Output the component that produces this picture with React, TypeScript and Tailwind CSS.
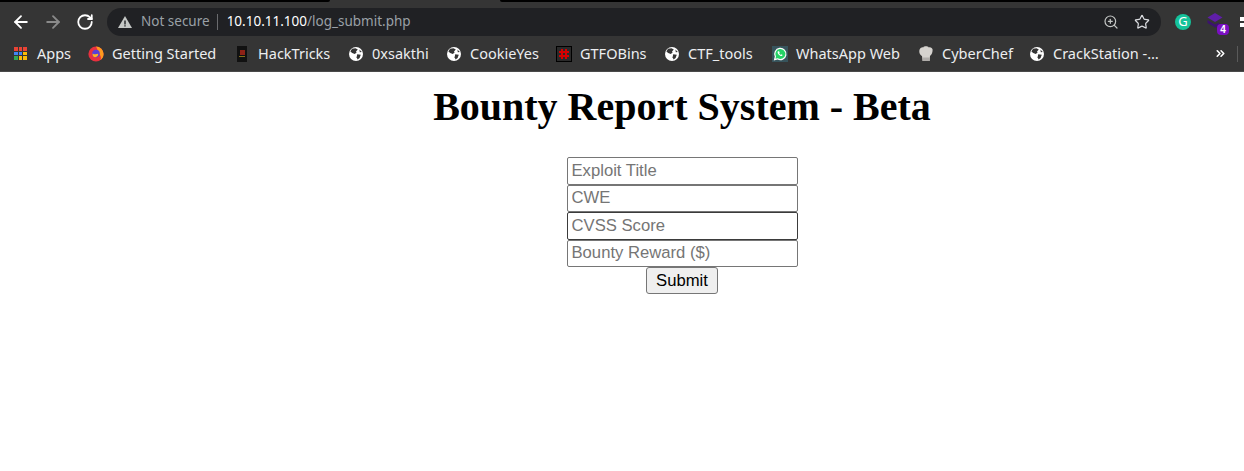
import React from "react";
import { ArrowLeft, ArrowRight, RotateCw, ZoomIn, Star, ChevronsRight } from "lucide-react";

function Globe() {
  return (
    <svg width="16" height="16" viewBox="0 0 16 16" className="shrink-0">
      <circle cx="8" cy="8" r="7" fill="#fff" />
      <path d="M4 2.8 7.5 2.2 9.8 3.6 8 5.4 8.6 6.6 6.8 8 4.2 7 2.4 5.6Z" fill="#353535" />
      <path d="M9.2 8.2 12.8 8.8 11.6 12 9.6 13.6 8.6 11.2Z" fill="#353535" />
      <path d="M11.4 3.6 13.8 6 11.8 6.2Z" fill="#353535" />
    </svg>
  );
}

function AppsIcon() {
  const colors = [
    "bg-[#ea4335]", "bg-[#ea4335]", "bg-[#ea4335]",
    "bg-[#4285f4]", "bg-[#4285f4]", "bg-[#fbbc05]",
    "bg-[#34a853]", "bg-[#fbbc05]", "bg-[#fbbc05]",
  ];
  return (
    <div className="grid grid-cols-3 gap-[1px] w-[13px] h-[13px] shrink-0 mr-[2px]">
      {colors.map((c, i) => (
        <span key={i} className={c} />
      ))}
    </div>
  );
}

function FirefoxIcon() {
  return (
    <svg width="16" height="16" viewBox="0 0 16 16" className="shrink-0">
      <circle cx="8" cy="8" r="7.6" fill="#e8303f" />
      <path d="M8 .4a7.6 7.6 0 0 1 7.6 7.6c0 2.6-1.2 4.6-3 6 .6-2 .4-4-1-5.6C10 6.6 9.6 3 8 .4Z" fill="#ff9a1f" />
      <circle cx="8" cy="7.6" r="3.8" fill="#5a3fd6" />
      <path d="M4.6 7.4c1.4 1.2 3.6 1 5.6.4.2 1.6-1 3.4-3 3.4-1.6 0-3-1.6-2.6-3.8Z" fill="#ffb21f" />
    </svg>
  );
}

function HackTricksIcon() {
  return (
    <div className="flex flex-col items-center justify-center gap-[1px] w-[10px] h-[16px] bg-[#111] shrink-0 mx-[3px]">
      <span className="w-[5px] h-[5px] bg-[#8f2116]" />
      <span className="w-[6px] h-[1px] bg-[#85701a]" />
    </div>
  );
}

function GtfoIcon() {
  return (
    <svg width="16" height="16" viewBox="0 0 16 16" className="shrink-0">
      <rect x=".5" y=".5" width="15" height="15" fill="#2a2a2a" stroke="#000" />
      <path d="M6 3v10M10 3v10M3 6h10M3 10h10" stroke="#d40000" strokeWidth="2" />
    </svg>
  );
}

function WhatsappIcon() {
  return (
    <svg width="16" height="16" viewBox="0 0 16 16" className="shrink-0">
      <rect width="16" height="16" fill="#37545c" />
      <path d="M2.6 13.6 3.4 10.6A5.6 5.6 0 1 1 5.5 12.8Z" fill="#25d366" stroke="#fff" strokeWidth="1.2" />
      <path d="M6 5.2c-.6.6-.6 1.6.4 3 1 1.3 2.4 2 3.3 1.8.5-.1.9-.6.9-1L9.4 8.3l-.6.6c-.6-.2-1.3-.9-1.6-1.6l.5-.6-.6-1.4Z" fill="#fff" />
    </svg>
  );
}

function ChefIcon() {
  return (
    <svg width="16" height="16" viewBox="0 0 16 16" className="shrink-0">
      <path d="M4 10C1.6 9 .8 5.5 1.6 3.5 2.4 1.5 4.4 1 5.2 1.4 6 0 9.6 0 10.8 1.4c1.6-.6 3.6.4 3.8 2.2.2 2.4-.8 5.4-2.6 6.4l-.4 5H4.6Z" fill="#d6d3cf" />
      <path d="M4.6 11.5h7V15h-7Z" fill="#b0adaa" />
    </svg>
  );
}

const bookmarks = [
  { label: "Apps", icon: <AppsIcon />, box: "w-[74px]" },
  { label: "Getting Started", icon: <FirefoxIcon />, box: "w-[146px]" },
  { label: "HackTricks", icon: <HackTricksIcon />, box: "w-[114px]" },
  { label: "0xsakthi", icon: <Globe />, box: "w-[98px]" },
  { label: "CookieYes", icon: <Globe />, box: "w-[110px]" },
  { label: "GTFOBins", icon: <GtfoIcon />, box: "w-[108px]" },
  { label: "CTF_tools", icon: <Globe />, box: "w-[108px]" },
  { label: "WhatsApp Web", icon: <WhatsappIcon />, box: "w-[146px]" },
  { label: "CyberChef", icon: <ChefIcon />, box: "w-[111px]" },
  { label: "CrackStation -…", icon: <Globe />, box: "w-[134px]" },
];

const fields = ["Exploit Title", "CWE", "CVSS Score", "Bounty Reward ($)"];

export default function App() {
  return (
    <div className="w-[1244px] h-[471px] overflow-hidden bg-white flex flex-col">
      {/* tab strip */}
      <div className="h-[7px] bg-[#353535] flex items-start shrink-0">
        <div className="w-[330px] h-[2px] bg-black rounded-br" />
        <div className="w-[170px]" />
        <div className="flex-1 h-[2px] bg-black rounded-bl" />
      </div>

      {/* toolbar */}
      <div className="h-[29px] bg-[#353535] flex items-center shrink-0 pl-[11px] overflow-hidden">
        <ArrowLeft size={20} strokeWidth={2.2} className="text-white shrink-0" />
        <ArrowRight size={20} strokeWidth={2.2} className="text-[#8a8a8a] ml-[12px] shrink-0" />
        <RotateCw size={18} strokeWidth={2.4} className="text-white ml-[13px] shrink-0" />
        <div className="ml-[13px] w-[1054px] h-[28px] shrink-0 rounded-full bg-[#202124] flex items-center pl-[10px] pr-[11px] font-['Noto_Sans',sans-serif] text-[13.5px]">
          <svg width="16" height="16" viewBox="0 0 16 16" className="shrink-0">
            <path d="M8 2 15 14H1Z" fill="#c4c7c5" />
            <path d="M7.3 6.5h1.4v4H7.3ZM7.3 11.2h1.4v1.4H7.3Z" fill="#202124" />
          </svg>
          <span className="ml-[8px] text-[#9aa0a6] whitespace-nowrap">Not secure</span>
          <span className="ml-[7px] w-px h-[16px] bg-[#6a6b6e]" />
          <span className="ml-[9px] text-white whitespace-nowrap">10.10.11.100</span>
          <span className="text-[#9aa0a6] whitespace-nowrap">/log_submit.php</span>
          <ZoomIn size={16} strokeWidth={1.8} className="text-[#c4c7c5] ml-auto" />
          <Star size={16} strokeWidth={1.8} className="text-[#dadce0] ml-[15px]" />
        </div>
        <div className="ml-[14px] w-[16px] h-[16px] shrink-0 rounded-full bg-[#15c39a] flex items-center justify-center text-white text-[13px] font-['Noto_Sans',sans-serif] leading-none">
          G
        </div>
        <div className="relative ml-[16px] w-[18px] h-[18px] shrink-0">
          <svg width="16" height="15" viewBox="0 0 16 15" className="absolute left-0 top-0">
            <path d="M8 0 15.5 4.5 8 9 .5 4.5Z" fill="#5f1fa8" />
            <path d="M.5 7 8 11.5 12 9.5V14L8 14.5 .5 10Z" fill="#3c1270" />
          </svg>
          <span className="absolute left-[10px] top-[11px] w-[12px] h-[11px] rounded-sm bg-[#7a0fc2] text-white text-[10px] font-bold leading-[11px] text-center font-['Liberation_Sans',sans-serif]">
            4
          </span>
        </div>
        <div className="ml-[15px] grid grid-cols-2 gap-[2px] w-[10px] shrink-0">
          <span className="w-[4px] h-[4px] bg-white" />
          <span className="w-[4px] h-[4px] bg-white" />
          <span className="w-[4px] h-[4px] bg-white" />
          <span className="w-[4px] h-[4px] bg-white" />
        </div>
      </div>

      {/* bookmarks bar */}
      <div className="h-[36px] bg-[#353535] border-b border-[#4a4a4a] flex items-center shrink-0 pl-[14px] font-['Noto_Sans',sans-serif] text-[14.5px] text-[#eceef0]">
        {bookmarks.map((b) => (
          <div key={b.label} className={`flex items-center gap-[8px] shrink-0 whitespace-nowrap ${b.box}`}>
            {b.icon}
            <span>{b.label}</span>
          </div>
        ))}
        <ChevronsRight size={13} strokeWidth={3} className="text-white ml-[51px] shrink-0" />
        <span className="ml-[10px] w-px h-[16px] bg-[#5a5a5a] shrink-0" />
      </div>

      {/* page */}
      <main className="flex-1 flex flex-col items-center pl-[120px] font-['Liberation_Serif',serif] text-black">
        <h1 className="text-[40px] font-bold leading-[46px] mt-[12px] mb-[27px]">Bounty Report System - Beta</h1>
        <form className="flex flex-col items-center font-['Liberation_Sans',sans-serif] text-[16.67px]">
          {fields.map((f, i) => (
            <input
              key={f}
              placeholder={f}
              className={`w-[231px] h-[27.5px] border rounded-[2px] px-[4px] placeholder:text-[#757575] bg-white ${
                i === 2 ? "border-[#3b3b3b]" : "border-[#767676]"
              }`}
            />
          ))}
          <button type="button" className="w-[72px] h-[27px] border border-[#767676] rounded-[3px] bg-[#efefef] text-black">
            Submit
          </button>
        </form>
      </main>
    </div>
  );
}
